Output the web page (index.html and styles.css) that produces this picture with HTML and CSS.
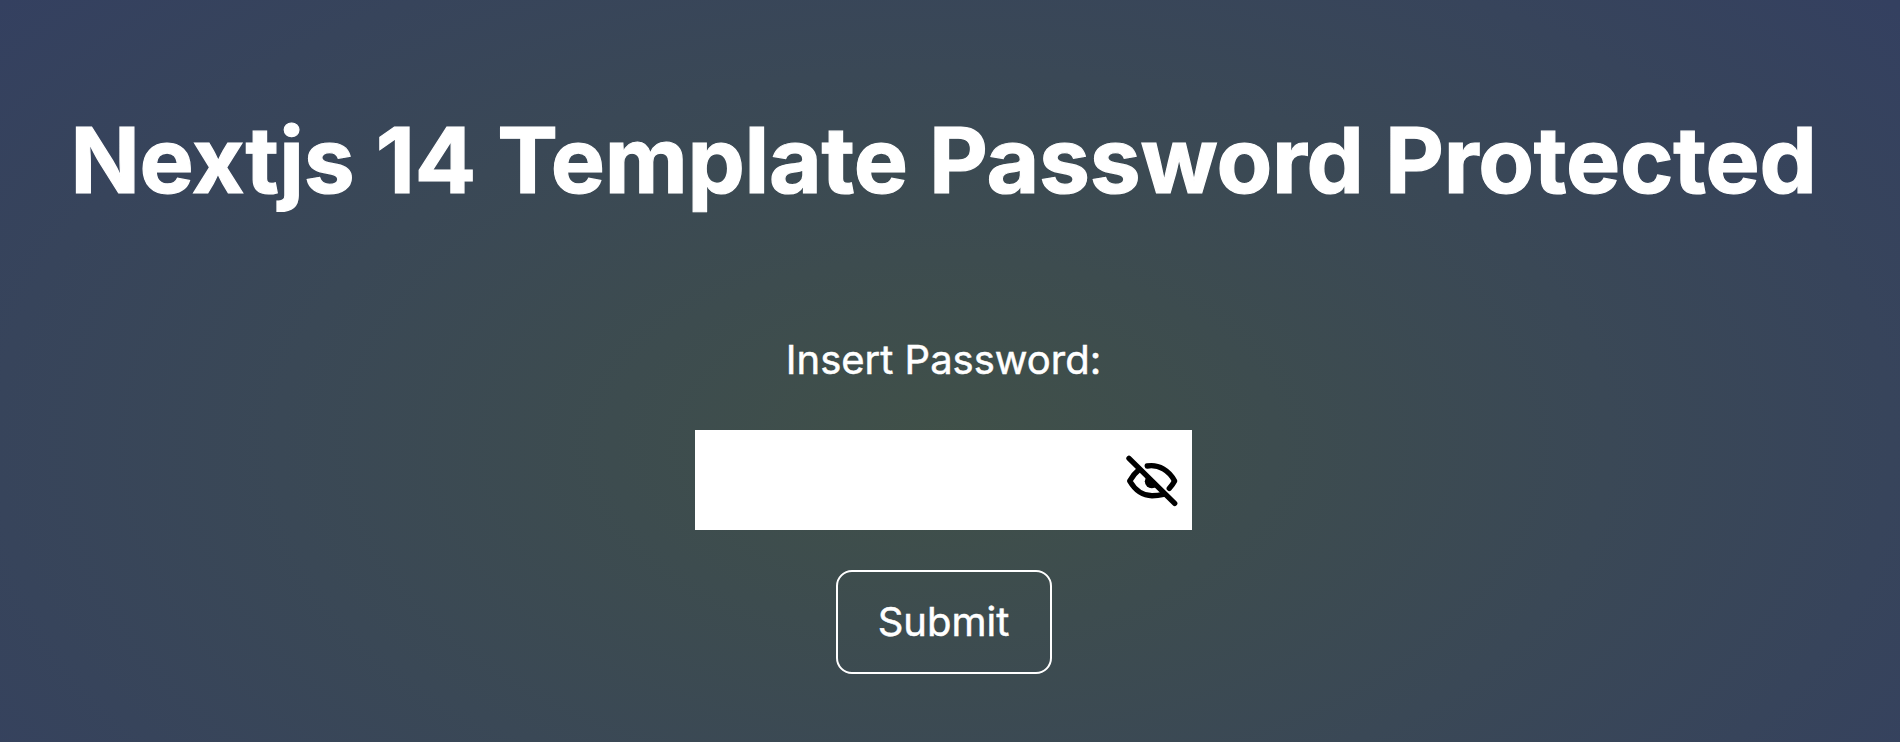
FILE: index.html
```html
<!DOCTYPE html>
<html lang="en">
<head>
<meta charset="utf-8">
<title>Nextjs 14 Template Password Protected</title>
<link rel="stylesheet" href="styles.css">
</head>
<body>
<main class="page">
  <h1 class="title">Nextjs 14 Template Password Protected</h1>
  <form class="form">
    <label class="label" for="password">Insert Password:</label>
    <div class="field">
      <input class="input" id="password" type="password">
      <button class="toggle" type="button" aria-label="Show password">
        <svg class="icon" viewBox="0 0 50 50">
          <path d="M2 2.3 47.7 47.3M12.3 13.3Q6.5 18 2.7 25C8 34 15 39.7 25 39.7Q31 39.7 36.3 38.3M20.3 10C32 8 42.5 15 47.6 25Q45.5 29 42.3 32.3"/>
          <path class="pupil" d="M20 20.3A6.9 6.9 0 1 0 29.8 30Z"/>
        </svg>
      </button>
    </div>
    <button class="submit" type="button">Submit</button>
  </form>
</main>
</body>
</html>
```
FILE: styles.css
```css
* { box-sizing: border-box; }
body {
  margin: 0;
  font-family: Inter, "Liberation Sans", sans-serif;
  color: #fff;
}
.page {
  height: 742px;
  padding: 105px 13px 0 0;
  display: flex;
  flex-direction: column;
  align-items: center;
  overflow: hidden;
  background: radial-gradient(ellipse 1230px 695px at 944px 445px, #405048 0%, #3a4856 54%, #344060 100%);
}
.title {
  margin: 0;
  font-size: 91px;
  line-height: 110px;
  font-weight: 700;
  letter-spacing: -0.25px;
  -webkit-text-stroke: 1.2px #fff;
  white-space: nowrap;
}
.form {
  margin-top: 121px;
  display: flex;
  flex-direction: column;
  align-items: center;
}
.label {
  font-size: 40px;
  line-height: 48px;
  -webkit-text-stroke: 0.5px #fff;
}
.field {
  width: 497px;
  width: 497px;
  height: 100px;
  margin-top: 46px;
  padding: 1px 15px 0 0;
  display: flex;
  align-items: center;
  background: #fff;
}
.input {
  flex: 1;
  min-width: 0;
  height: 100%;
  padding: 0 16px;
  border: 0;
  outline: 0;
  background: transparent;
  font: inherit;
  font-size: 40px;
}
.toggle {
  padding: 0;
  border: 0;
  background: none;
  display: flex;
}
.icon {
  width: 50px;
  height: 50px;
  overflow: visible;
  fill: none;
  stroke: #000;
  stroke-width: 5.4;
  stroke-linecap: round;
  stroke-linejoin: round;
}
.pupil {
  fill: #000;
  stroke: none;
}
.submit {
  margin-top: 40px;
  width: 216px;
  height: 104px;
  padding: 0 0 2px;
  border: 2px solid #fff;
  border-radius: 16px;
  background: transparent;
  color: #fff;
  font: inherit;
  font-size: 40px;
  -webkit-text-stroke: 0.5px #fff;
}
```
